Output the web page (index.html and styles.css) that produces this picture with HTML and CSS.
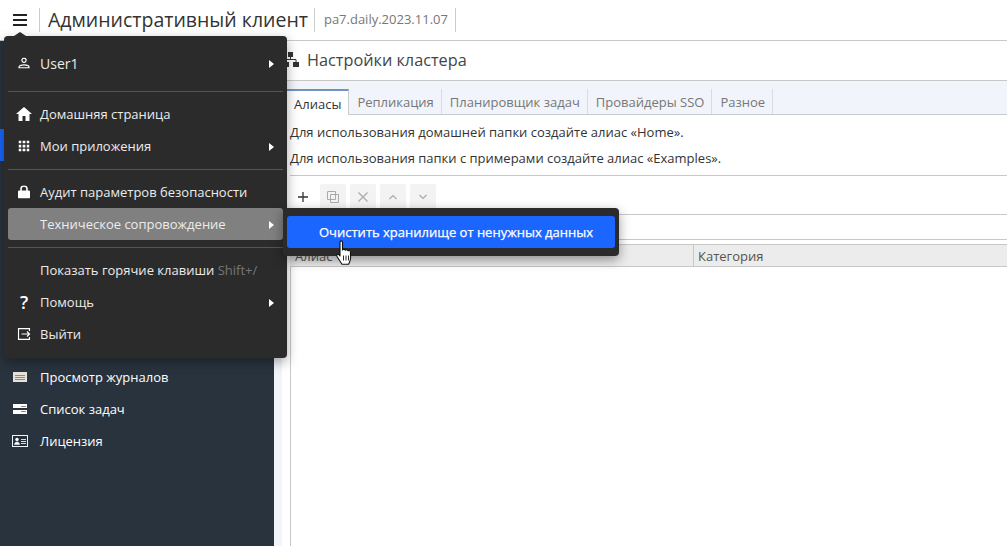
FILE: index.html
```html
<!DOCTYPE html>
<html lang="ru">
<head>
<meta charset="utf-8">
<title>Административный клиент</title>
<link rel="stylesheet" href="styles.css">
</head>
<body>
<header class="topbar">
  <button class="burger"><svg width="16" height="14" viewBox="0 0 16 14"><path d="M1 2h14M1 7h14M1 12h14" stroke="#222" stroke-width="2" fill="none"/></svg></button>
  <h1 class="app-title">Административный клиент</h1>
  <span class="version">pa7.daily.2023.11.07</span>
</header>
<div class="main">
  <nav class="sidebar">
    <div class="active-row"></div>
    <a class="side-item"><svg class="ic" width="16" height="12" viewBox="0 0 16 12"><rect x="1" y="1" width="14" height="10" fill="#e6e4da"/><path d="M3 4.500h10M3 6.500h10M3 8.500h10" stroke="#8a8a86" stroke-width="1"/></svg>Просмотр журналов</a>
    <a class="side-item"><svg class="ic" width="16" height="12" viewBox="0 0 16 12"><rect x="1" y="1" width="14" height="4" fill="#fff"/><rect x="1" y="7" width="14" height="4" fill="#fff"/><path d="M9 3.500h5M9 8.500h5" stroke="#888"/></svg>Список задач</a>
    <a class="side-item"><svg class="ic" width="16" height="12" viewBox="0 0 16 12"><rect x="0.500" y="0.500" width="15" height="11" fill="#26303a" stroke="#eaf6ff" stroke-width="1"/><circle cx="5" cy="4.400" r="1.700" fill="#fff"/><path d="M2.500 9.500c0-3.500 5-3.500 5 0z" fill="#fff" stroke="#fff" stroke-width=".5"/><path d="M9 4.500h5M9 6.500h5M9 8.500h5" stroke="#ddd"/></svg>Лицензия</a>
  </nav>
  <div class="strip"></div>
  <section class="content">
    <div class="page-title"><svg class="title-ic" width="16" height="16" viewBox="0 0 16 16"><path d="M5 0h5v5H5zM0 10h6v5H0zM10 10h6v5h-6z" fill="#333"/><path d="M7.500 5v3M3 10V7.500h10V10" stroke="#333" fill="none"/></svg>Настройки кластера</div>
    <div class="tabs">
      <span class="tab tab-active">Алиасы</span>
      <span class="tab">Репликация</span>
      <span class="tab">Планировщик задач</span>
      <span class="tab">Провайдеры SSO</span>
      <span class="tab">Разное</span>
    </div>
    <div class="panel">
      <div class="notes">
        <p>Для использования домашней папки создайте алиас «Home».</p>
        <p>Для использования папки с примерами создайте алиас «Examples».</p>
      </div>
      <div class="toolbar">
        <span class="tool"><svg width="12" height="12" viewBox="0 0 12 12"><path d="M6 1v10M1 6h10" stroke="#333" stroke-width="1.300" fill="none"/></svg></span>
        <span class="tool tool-off"><svg width="14" height="14" viewBox="0 0 14 14"><path d="M1.500 1.500h8v8h-8zM4.500 4.500h8v8h-8z" stroke="#aaa" fill="none"/></svg></span>
        <span class="tool tool-off"><svg width="12" height="12" viewBox="0 0 12 12"><path d="M1.500 1.500l9 9M10.500 1.500l-9 9" stroke="#aaa" stroke-width="1.200" fill="none"/></svg></span>
        <span class="tool tool-off"><svg width="10" height="6" viewBox="0 0 10 6"><path d="M1.500 5L5 1.500 8.500 5" stroke="#aaa" stroke-width="1.200" fill="none"/></svg></span>
        <span class="tool tool-off"><svg width="10" height="6" viewBox="0 0 10 6"><path d="M1.500 1L5 4.500 8.500 1" stroke="#aaa" stroke-width="1.200" fill="none"/></svg></span>
      </div>
      <div class="filter-row"></div>
      <div class="grid-head">
        <span class="col col-alias">Алиас</span>
        <span class="col">Категория</span>
      </div>
      <div class="grid-body"></div>
    </div>
  </section>
</div>

<div class="menu">
  <div class="caret"></div>
  <div class="menu-group user-group">
    <a class="menu-item user-item"><svg class="mi" width="12" height="11" viewBox="0 0 12 11"><circle cx="6" cy="2.800" r="2.100" fill="none" stroke="#fff" stroke-width="1.200"/><path d="M1 10.300V9.500C1 8 4 7.300 6 7.300s5 .7 5 2.200v.8z" fill="none" stroke="#fff" stroke-width="1.200"/></svg>User1<i class="arrow"></i></a>
  </div>
  <div class="menu-group">
    <a class="menu-item"><svg class="mi" width="16" height="14" viewBox="0 0 16 14"><path d="M8 0L0 7h2.500v7h4V9h3v5h4V7H16z" fill="#fff"/></svg>Домашняя страница</a>
    <a class="menu-item"><svg class="mi" width="11" height="11" viewBox="0 0 12 12"><path d="M0 0h3v3H0zM4.500 0h3v3h-3zM9 0h3v3H9zM0 4.500h3v3H0zM4.500 4.500h3v3h-3zM9 4.500h3v3H9zM0 9h3v3H0zM4.500 9h3v3h-3zM9 9h3v3H9z" fill="#fff"/></svg>Мои приложения<i class="arrow"></i></a>
  </div>
  <div class="menu-group">
    <a class="menu-item"><svg class="mi" width="12" height="13" viewBox="0 0 12 13"><path d="M3 6V3.500a3 3 0 0 1 6 0V6" fill="none" stroke="#fff" stroke-width="1.600"/><rect y="5" width="12" height="8" rx="1" fill="#fff"/></svg>Аудит параметров безопасности</a>
    <a class="menu-item menu-item-hover">Техническое сопровождение<i class="arrow"></i></a>
  </div>
  <div class="menu-group last-group">
    <a class="menu-item">Показать горячие клавиши <span class="shortcut">Shift+/</span></a>
    <a class="menu-item"><span class="mi q">?</span>Помощь<i class="arrow"></i></a>
    <a class="menu-item"><svg class="mi" width="13" height="12" viewBox="0 0 13 12"><path d="M12 3V.7H1v10.600h11V9M4 6h8M9.500 3.500L12 6 9.500 8.500" fill="none" stroke="#fff" stroke-width="1.200"/></svg>Выйти</a>
  </div>
</div>

<div class="submenu">
  <a class="sub-item">Очистить хранилище от ненужных данных</a>
</div>

<svg class="cursor" width="17" height="27" viewBox="0 0 17 27"><path d="M4 2c0-1.500 2.500-1.500 2.500 0v8c.5-1.200 2.500-1.200 2.800.3.500-1 2.400-1 2.600.5.600-.8 2.400-.5 2.500 1l.2 6c0 3-1 4-2 6.500H6L1 16.500c-1-1.500 1-3 2.200-1.500l.8 1z" fill="#fff" stroke="#111" stroke-width="1.100" stroke-linejoin="round"/><path d="M7.500 15.500v5M10 15.500v5M12.500 15.500v5" stroke="#111" stroke-width=".9"/></svg>
</body>
</html>
```
FILE: styles.css
```css
* { box-sizing: border-box; }
html, body { height: 100%; }
body {
  margin: 0;
  overflow: hidden;
  background: #fff;
  color: #333;
  font-family: "Open Sans", sans-serif;
  font-size: 13px;
  display: flex;
  flex-direction: column;
}
.topbar {
  height: 41px;
  flex: none;
  display: flex;
  align-items: center;
  border-bottom: 1px solid #c8c8c8;
}
.burger {
  width: 40px;
  height: 24px;
  padding: 0 0 0 12px;
  margin-top: -1px;
  border: 0;
  border-right: 1px solid #ccc;
  background: none;
  display: flex;
  align-items: center;
}
.app-title {
  margin: -1px 0 0 0;
  padding: 0 6px 0 8px;
  height: 24px;
  line-height: 23px;
  border-right: 1px solid #ccc;
  font-size: 19.5px;
  font-weight: 400;
  color: #333;
}
.version {
  margin-top: -1px;
  padding: 0 7px 0 9px;
  height: 24px;
  line-height: 23px;
  border-right: 1px solid #ccc;
  color: #777;
}
.main {
  flex: 1;
  min-height: 0;
  display: flex;
}
.sidebar {
  width: 274px;
  flex: none;
  padding-top: 88px;
  background: #29333d;
  color: #fff;
}
.active-row {
  width: 4px;
  height: 32px;
  margin-bottom: 200px;
  background: #1a66ff;
}
.side-item {
  height: 32px;
  display: flex;
  align-items: center;
  padding-left: 12px;
}
.ic { width: 16px; margin-right: 12px; flex: none; }
.strip { width: 8px; flex: none; background: #f1f4fa; }
.content {
  flex: 1;
  min-width: 0;
  display: flex;
  flex-direction: column;
}
.page-title {
  height: 40px;
  flex: none;
  display: flex;
  align-items: center;
  padding: 0 0 2px 1px;
  border-bottom: 1px solid #c8c8c8;
  font-size: 16.25px;
  color: #444;
}
.title-ic { margin-right: 8px; }
.tabs {
  height: 34px;
  flex: none;
  display: flex;
  align-items: flex-end;
  padding-left: 5px;
  background: #f1f4fa;
  border-bottom: 1px solid #c8ccd2;
}
.tab {
  height: 25px;
  line-height: 27px;
  padding: 0 7px 0 8px;
  border-right: 1px solid #d8dbe0;
  color: #777;
}
.tab-active {
  height: 26px;
  margin-bottom: -1px;
  padding: 0 7px 0 7px;
  background: #fff;
  color: #333;
  border-top: 2px solid #6f93bd;
  border-right: 1px solid #c8ccd2;
}
.panel {
  flex: 1;
  margin-left: 8px;
  display: flex;
  flex-direction: column;
  min-height: 0;
}
.notes {
  height: 60px;
  flex: none;
  padding: 4px 0 0;
}
.notes p { margin: 0; height: 26px; line-height: 26px; }
.toolbar {
  height: 40px;
  flex: none;
  display: flex;
  gap: 4px;
  padding: 8px 0 0 0;
  border-top: 1px solid #c8c8c8;
  border-bottom: 1px solid #c8c8c8;
}
.tool {
  width: 26px;
  height: 26px;
  display: flex;
  align-items: center;
  justify-content: center;
}
.tool-off { background: #f3f3f3; border-radius: 2px; }
.filter-row {
  height: 25px;
  flex: none;
  border-bottom: 1px solid #c8c8c8;
}
.grid-head {
  height: 23px;
  flex: none;
  margin-top: 4px;
  padding-left: 1px;
  display: flex;
  background: #ececec;
  border-top: 1px solid #c8c8c8;
  border-bottom: 1px solid #c8c8c8;
}
.col { padding-left: 4px; line-height: 22px; color: #555; }
.col-alias { width: 403px; border-right: 1px solid #c8c8c8; }
.grid-body { flex: 1; border-left: 1px solid #c8c8c8; }

.menu {
  position: absolute;
  left: 4px;
  top: 36px;
  width: 283px;
  height: 322px;
  background: #2b2b2b;
  border-radius: 4px;
  box-shadow: 0 4px 12px rgba(0, 0, 0, .35);
  color: #ececec;
  padding: 11px 4px 0;
}
.caret {
  position: absolute;
  left: 10px;
  top: -4px;
  border-left: 6px solid transparent;
  border-right: 6px solid transparent;
  border-bottom: 4px solid #2b2b2b;
}
.menu-group {
  padding: 6px 0 7px;
  border-bottom: 1px solid #555;
}
.user-group { padding: 0 0 12px; }
.user-item { font-size: 14px; }
.last-group { border-bottom: 0; }
.menu-item {
  position: relative;
  height: 32px;
  display: flex;
  align-items: center;
  padding-left: 32px;
  border-radius: 3px;
  white-space: pre;
}
.menu-item-hover { background: #808080; }
.mi {
  position: absolute;
  left: 16px;
  top: 50%;
  transform: translate(-50%, -50%);
}
.q { font-size: 18px; line-height: 20px; color: #fff; font-weight: 600; }
.shortcut { color: #777; }
.arrow {
  position: absolute;
  right: 9px;
  top: 13px;
  border-top: 4px solid transparent;
  border-bottom: 4px solid transparent;
  border-left: 5px solid #fff;
}
.submenu {
  position: absolute;
  left: 283px;
  top: 208px;
  width: 336px;
  height: 48px;
  padding: 8px 4px;
  background: #2b2b2b;
  border-radius: 4px;
  box-shadow: 0 4px 12px rgba(0, 0, 0, .4);
}
.sub-item {
  height: 32px;
  display: block;
  line-height: 32px;
  padding-left: 32px;
  border-radius: 3px;
  background: #1a66ff;
  color: #fff;
  -webkit-text-stroke: .25px #fff;
}
.cursor {
  position: absolute;
  left: 336px;
  top: 240px;
}
```
